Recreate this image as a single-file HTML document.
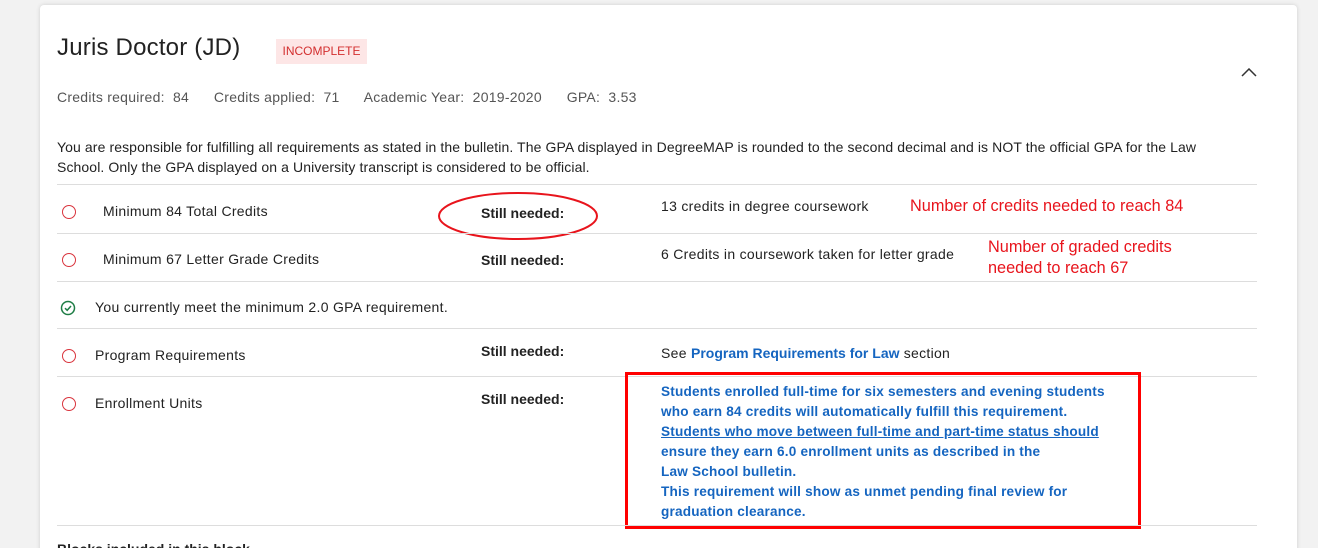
<!DOCTYPE html>
<html><head><meta charset="utf-8"><style>
html,body{margin:0;width:1318px;height:548px;overflow:hidden}
body{background:#f2f2f2;font-family:"Liberation Sans",sans-serif;color:#222;position:relative}
.card{position:absolute;left:40px;top:5px;width:1257px;height:560px;background:#fff;border-radius:4px;box-shadow:0 0 4px rgba(0,0,0,.15)}
.a{position:absolute;white-space:nowrap;font-size:14px;letter-spacing:0.3px}
.hr{position:absolute;left:57px;width:1200px;height:1px;background:#ddd}
.c{position:absolute;width:12px;height:12px;border:1.5px solid #d9343d;border-radius:50%}
.b{font-weight:bold;letter-spacing:0}
.blue{color:#1565c0}
.red{color:#e8141c;font-size:16.3px;letter-spacing:0}
</style></head><body>
<div class="card"></div>
<div class="a" style="left:57px;top:34px;font-size:24px;color:#222;letter-spacing:0.2px">Juris Doctor (JD)</div>
<div class="a" style="left:276px;top:39px;width:91px;height:25px;background:#fde6e6;color:#d32f2f;font-size:12px;line-height:25px;text-align:center;letter-spacing:0">INCOMPLETE</div>
<svg class="a" style="left:1241px;top:68px" width="16" height="10"><path d="M1 8 L8 1 L15 8" fill="none" stroke="#333" stroke-width="1.5"/></svg>
<div class="a" style="left:57px;top:89px;color:#555;letter-spacing:0.25px">Credits required:&nbsp; 84 &nbsp;&nbsp;&nbsp;&nbsp; Credits applied:&nbsp; 71 &nbsp;&nbsp;&nbsp;&nbsp; Academic Year:&nbsp; 2019-2020 &nbsp;&nbsp;&nbsp;&nbsp; GPA:&nbsp; 3.53</div>
<div class="a" style="left:57px;top:137px;line-height:20px;white-space:normal;width:1190px;letter-spacing:0.1px">You are responsible for fulfilling all requirements as stated in the bulletin. The GPA displayed in DegreeMAP is rounded to the second decimal and is NOT the official GPA for the Law School. Only the GPA displayed on a University transcript is considered to be official.</div>
<div class="hr" style="top:184px"></div>
<div class="c" style="left:62px;top:205px"></div>
<div class="a" style="left:103px;top:203px">Minimum 84 Total Credits</div>
<div class="a b" style="left:481px;top:205px">Still needed:</div>
<div class="a" style="left:661px;top:198px">13 credits in degree coursework</div>
<div class="a red" style="left:910px;top:197px">Number of credits needed to reach 84</div>
<svg class="a" style="left:438px;top:192px" width="164" height="50"><ellipse cx="80" cy="24" rx="79" ry="23" fill="none" stroke="#e8141c" stroke-width="2"/></svg>
<div class="hr" style="top:233px"></div>
<div class="c" style="left:62px;top:253px"></div>
<div class="a" style="left:103px;top:251px">Minimum 67 Letter Grade Credits</div>
<div class="a b" style="left:481px;top:252px">Still needed:</div>
<div class="a" style="left:661px;top:246px">6 Credits in coursework taken for letter grade</div>
<div class="a red" style="left:988px;top:237px;line-height:21px">Number of graded credits<br>needed to reach 67</div>
<div class="hr" style="top:281px"></div>
<svg class="a" style="left:60px;top:300px" width="16" height="16"><circle cx="8" cy="8" r="6.5" fill="none" stroke="#1e7d45" stroke-width="1.5"/><path d="M5 8.2 L7.2 10.3 L11 6" fill="none" stroke="#1e7d45" stroke-width="1.5"/></svg>
<div class="a" style="left:95px;top:299px">You currently meet the minimum 2.0 GPA requirement.</div>
<div class="hr" style="top:328px"></div>
<div class="c" style="left:62px;top:349px"></div>
<div class="a" style="left:95px;top:347px">Program Requirements</div>
<div class="a b" style="left:481px;top:343px">Still needed:</div>
<div class="a" style="left:661px;top:345px">See <span class="blue b" style="letter-spacing:0">Program Requirements for Law</span> section</div>
<div class="hr" style="top:376px"></div>
<div class="c" style="left:62px;top:397px"></div>
<div class="a" style="left:95px;top:395px">Enrollment Units</div>
<div class="a b" style="left:481px;top:391px">Still needed:</div>
<div class="a blue b" style="left:661px;top:382px;line-height:20px;font-size:13.6px;letter-spacing:0.2px">Students enrolled full-time for six semesters and evening students<br>who earn 84 credits will automatically fulfill this requirement.<br><u>Students who move between full-time and part-time status should</u><br>ensure they earn 6.0 enrollment units as described in the<br>Law School bulletin.<br>This requirement will show as unmet pending final review for<br>graduation clearance.</div>
<div class="a" style="left:625px;top:372px;width:510px;height:151px;border:3px solid #f00"></div>
<div class="hr" style="top:525px"></div>
<div class="a b" style="left:57px;top:541px">Blocks included in this block</div>
</body></html>
